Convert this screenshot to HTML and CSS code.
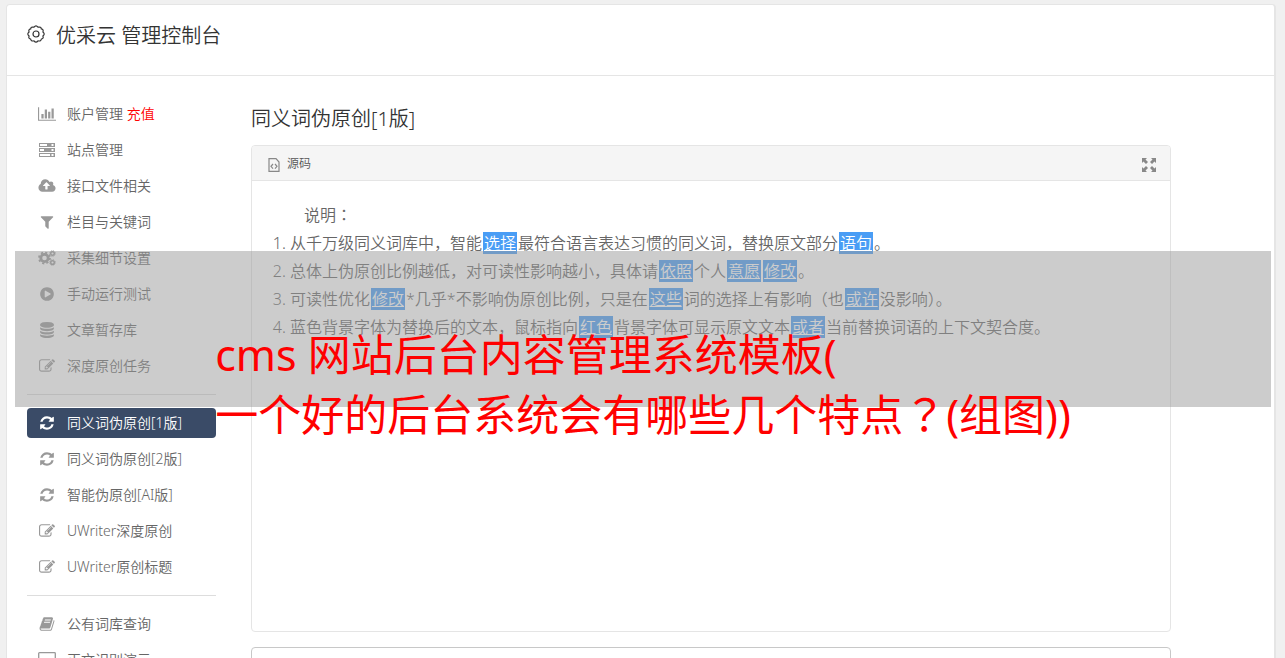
FILE: index.html
```
<!DOCTYPE html>
<html lang="zh-CN">
  <head>
    <title>优采云 管理控制台</title>
    <meta charset="utf-8" />
    <link rel="stylesheet" href="styles.css">
  </head>
  <body>
    <svg class="sprite" aria-hidden="true">
      <symbol id="i-chart" viewBox="0 0 2048 1792"><path d="M640 896v512h-256v-512h256zm384-512v1024h-256v-1024h256zm1024 1152v128h-2048v-1536h128v1408h1920zm-640-896v768h-256v-768h256zm384-384v1152h-256v-1152h256z"/></symbol>
      <symbol id="i-server" viewBox="0 0 18 16"><path fill-rule="evenodd" d="M1 1h16v4H1zM2 2v2h7V2zM13.500 2v2h2V2zM1 6h16v4H1zM2 7v2h4V7zM13.500 7v2h2V7zM1 11h16v4H1zM2 12v2h10v-2zM13.500 12v2h2v-2z"/></symbol>
      <symbol id="i-cloud" viewBox="0 0 1920 1792"><path d="M1280 864q0-14-9-23l-352-352q-9-9-23-9t-23 9l-351 351q-10 12-10 24 0 14 9 23t23 9h224v352q0 13 9.500 22.500t22.500 9.500h192q13 0 22.500-9.500t9.500-22.500v-352h224q13 0 22.500-9.500t9.500-22.500zm640 288q0 159-112.500 271.500t-271.500 112.500h-1088q-185 0-316.500-131.500t-131.500-316.500q0-130 70-240t188-165q-2-30-2-43 0-212 150-362t362-150q156 0 285.500 87t188.500 231q71-62 166-62 106 0 181 75t75 181q0 76-41 138 130 31 213.500 135.500t83.500 238.500z"/></symbol>
      <symbol id="i-filter" viewBox="0 0 1792 1792"><path d="M1595 295q17 41-14 70l-493 493v742q0 42-39 59-13 5-25 5-27 0-45-19l-256-256q-19-19-19-45v-486l-493-493q-31-29-14-70 17-39 59-39h1280q42 0 59 39z"/></symbol>
      <symbol id="i-cogs" viewBox="0 0 18 16"><g fill="none" stroke="currentColor"><circle cx="6.500" cy="8" r="3.700" stroke-width="2.800"/><circle cx="6.500" cy="8" r="5.500" stroke-width="1.800" stroke-dasharray="2.160 2.160"/><circle cx="14.500" cy="3.500" r="1.800" stroke-width="1.500"/><circle cx="14.500" cy="3.500" r="2.800" stroke-width="1" stroke-dasharray="1.100 1.100"/><circle cx="14.500" cy="12.500" r="1.800" stroke-width="1.500"/><circle cx="14.500" cy="12.500" r="2.800" stroke-width="1" stroke-dasharray="1.100 1.100"/></g></symbol>
      <symbol id="i-play" viewBox="0 0 1792 1792"><path d="M896 128q209 0 385.500 103t279.500 279.500 103 385.500-103 385.500-279.500 279.500-385.500 103-385.500-103-279.500-279.500-103-385.500 103-385.500 279.500-279.500 385.500-103zm384 823q32-18 32-55t-32-55l-544-320q-31-19-64-1-32 19-32 56v640q0 37 32 56 16 8 32 8 17 0 32-9z"/></symbol>
      <symbol id="i-database" viewBox="0 0 1792 1792"><path d="M896 768q237 0 443-43t325-127v170q0 69-103 128t-280 93.500-385 34.500-385-34.500-280-93.500-103-128v-170q119 84 325 127t443 43zm0 768q237 0 443-43t325-127v170q0 69-103 128t-280 93.500-385 34.500-385-34.500-280-93.500-103-128v-170q119 84 325 127t443 43zm0-384q237 0 443-43t325-127v170q0 69-103 128t-280 93.500-385 34.500-385-34.500-280-93.500-103-128v-170q119 84 325 127t443 43zm0-1152q208 0 385 34.500t280 93.500 103 128v128q0 69-103 128t-280 93.500-385 34.500-385-34.500-280-93.500-103-128v-128q0-69 103-128t280-93.500 385-34.500z"/></symbol>
      <symbol id="i-edit" viewBox="0 0 1792 1792"><path d="M888 1184l116-116-152-152-116 116v56h96v96h56zm440-720q-16-16-33 1l-350 350q-17 17-1 33t33-1l350-350q17-17 1-33zm80 594v190q0 119-84.500 203.500t-203.500 84.500h-832q-119 0-203.500-84.500t-84.500-203.500v-832q0-119 84.500-203.500t203.500-84.500h832q63 0 117 25 15 7 18 23 3 17-9 29l-49 49q-14 14-32 8-23-6-45-6h-832q-66 0-113 47t-47 113v832q0 66 47 113t113 47h832q66 0 113-47t47-113v-126q0-13 9-22l64-64q15-15 35-7t20 29zm-96-738l288 288-672 672h-288v-288zm444 132l-92 92-288-288 92-92q28-28 68-28t68 28l152 152q28 28 28 68t-28 68z"/></symbol>
      <symbol id="i-refresh" viewBox="0 0 1792 1792"><path d="M1639 1056q0 5-1 7-64 268-268 434.500t-478 166.500q-146 0-282.500-55t-243.500-157l-129 129q-19 19-45 19t-45-19-19-45v-448q0-26 19-45t45-19h448q26 0 45 19t19 45-19 45l-137 137q71 66 161 102t187 36q134 0 250-65t186-179q11-17 53-117 8-23 30-23h192q13 0 22.500 9.500t9.500 22.500zm25-800v448q0 26-19 45t-45 19h-448q-26 0-45-19t-19-45 19-45l138-138q-148-137-349-137-134 0-250 65t-186 179q-11 17-53 117-8 23-30 23h-199q-13 0-22.500-9.500t-9.500-22.500v-7q65-268 270-434.500t480-166.500q146 0 284 55.500t245 156.500l130-129q19-19 45-19t45 19 19 45z"/></symbol>
      <symbol id="i-book" viewBox="0 0 1792 1792"><path d="M1703 478q40 57 18 129l-275 906q-19 64-76.500 107.500t-122.500 43.500h-923q-77 0-148.500-53.500t-99.500-131.500q-24-67-2-127 0-4 3-27t4-37q1-8-3-21.500t-3-19.500q2-11 8-21t16.500-23.500 16.500-23.500q23-38 45-91.500t30-91.500q3-10 .5-30t-.5-28q3-11 17-28t17-23q21-36 42-92t25-90q1-9-2.500-32t.5-28q4-13 22-30.500t22-22.500q19-26 42.500-84.500t27.500-96.500q1-8-3-25.500t-2-26.500q2-8 9-18t18-23 17-21q8-12 16.500-30.500t15-35 16-36 19.500-32 26.500-23.500 36-11.500 47.500 5.500l-1 3q38-9 51-9h761q74 0 114 56t18 130l-274 906q-36 119-71.500 153.500t-128.500 34.500h-869q-27 0-38 15-11 16-1 43 24 70 144 70h923q29 0 56-15.500t35-41.500l300-987q7-22 5-57 38 15 59 43zm-1064 2q-4 13 2 22.500t20 9.500h608q13 0 25.500-9.500t16.500-22.500l21-64q4-13-2-22.500t-20-9.500h-608q-13 0-25.500 9.500t-16.500 22.500zm-83 256q-4 13 2 22.500t20 9.500h608q13 0 25.500-9.500t16.500-22.500l21-64q4-13-2-22.500t-20-9.500h-608q-13 0-25.500 9.500t-16.500 22.500z"/></symbol>
      <symbol id="i-desktop" viewBox="0 0 18 16"><path fill="none" stroke="currentColor" stroke-width="1.300" d="M1.500.7h15q.8 0 .8.800v9.500q0 .8-.8.800h-15q-.8 0-.8-.8v-9.500q0-.8.8-.8zM5 15h8M9 12v3"/></symbol>
      <symbol id="i-gear" viewBox="0 0 18 18"><path fill="none" stroke="currentColor" stroke-width="1.200" stroke-linejoin="round" d="M7 2.200Q9-.4 11 2.200Q14.200 1.500 14.300 3.900Q17 4.400 15.900 7Q18.500 9 15.900 11Q17 13.600 14.300 14.100Q14.200 16.600 11 15.800Q9 18.400 7 15.800Q3.800 16.600 3.700 14.100Q1 13.600 2.100 11Q-.5 9 2.100 7Q1 4.400 3.700 3.900Q3.800 1.500 7 2.200z"/><circle cx="9" cy="9" r="3" fill="none" stroke="currentColor" stroke-width="1.200"/></symbol>
      <symbol id="i-code" viewBox="0 0 12 14"><path fill="none" stroke="currentColor" stroke-width="1.200" d="M1 .6h7L11 4v9.400H1z"/><path fill="none" stroke="currentColor" stroke-width="1.200" d="M5 6L3 8.300l2 2.300M7 6l2 2.300-2 2.300"/></symbol>
      <symbol id="i-expand" viewBox="0 0 14 14"><path d="M0 0h5L3.500 1.500 6 4 4 6 1.500 3.500 0 5zM14 0v5l-1.500-1.500L10 6 8 4l2.500-2.500L9 0zM0 14V9l1.500 1.500L4 8l2 2-2.500 2.500L5 14zM14 14H9l1.500-1.500L8 10l2-2 2.500 2.500L14 9z"/></symbol>
    </svg>

    <div class="panel">
      <header class="panel-header">
        <svg class="gear"><use href="#i-gear"/></svg>
        <h1>优采云 管理控制台</h1>
      </header>
      <div class="panel-body">
        <nav class="sidebar">
          <ul>
            <li><a href="#"><svg class="icon"><use href="#i-chart"/></svg>账户管理 <span class="text-red">充值</span></a></li>
            <li><a href="#"><svg class="icon"><use href="#i-server"/></svg>站点管理</a></li>
            <li><a href="#"><svg class="icon"><use href="#i-cloud"/></svg>接口文件相关</a></li>
            <li><a href="#"><svg class="icon"><use href="#i-filter"/></svg>栏目与关键词</a></li>
            <li><a href="#"><svg class="icon"><use href="#i-cogs"/></svg>采集细节设置</a></li>
            <li><a href="#"><svg class="icon"><use href="#i-play"/></svg>手动运行测试</a></li>
            <li><a href="#"><svg class="icon"><use href="#i-database"/></svg>文章暂存库</a></li>
            <li><a href="#"><svg class="icon"><use href="#i-edit"/></svg>深度原创任务</a></li>
          </ul>
          <ul>
            <li class="active"><a href="#"><svg class="icon"><use href="#i-refresh"/></svg>同义词伪原创[1版]</a></li>
            <li><a href="#"><svg class="icon"><use href="#i-refresh"/></svg>同义词伪原创[2版]</a></li>
            <li><a href="#"><svg class="icon"><use href="#i-refresh"/></svg>智能伪原创[AI版]</a></li>
            <li><a href="#"><svg class="icon"><use href="#i-edit"/></svg>UWriter深度原创</a></li>
            <li><a href="#"><svg class="icon"><use href="#i-edit"/></svg>UWriter原创标题</a></li>
          </ul>
          <ul>
            <li><a href="#"><svg class="icon"><use href="#i-book"/></svg>公有词库查询</a></li>
            <li><a href="#"><svg class="icon"><use href="#i-desktop"/></svg>正文识别演示</a></li>
          </ul>
        </nav>

        <main class="content">
          <h2>同义词伪原创[1版]</h2>
          <div class="editor">
            <div class="toolbar">
              <button type="button" class="btn-tool"><svg class="icon-code"><use href="#i-code"/></svg>源码</button>
              <button type="button" class="btn-tool" aria-label="全屏"><svg class="icon-expand"><use href="#i-expand"/></svg></button>
            </div>
            <div class="editor-body">
              <p>说明<span class="punct" lang="ja">：</span></p>
              <ol>
                <li>从千万级同义词库中，智能<a href="#">选择</a>最符合语言表达习惯的同义词，替换原文部分<a href="#">语句</a>。</li>
                <li>总体上伪原创比例越低，对可读性影响越小，具体请<a href="#">依照</a>个人<a href="#">意愿</a><a href="#">修改</a>。</li>
                <li>可读性优化<a href="#">修改</a>*几乎*不影响伪原创比例，只是在<a href="#">这些</a>词的选择上有影响（也<a href="#">或许</a>没影响）。</li>
                <li>蓝色背景字体为替换后的文本，鼠标指向<a href="#">红色</a>背景字体可显示原文文本<a href="#">或者</a>当前替换词语的上下文契合度。</li>
              </ol>
            </div>
          </div>
          <textarea class="source-input" aria-label="原文"></textarea>
        </main>
      </div>
    </div>

    <div class="banner">
      <p>cms 网站后台内容管理系统模板(<br />一个好的后台系统会有哪些几个特点<span class="punct" lang="ja">？</span>(组图))</p>
    </div>
  </body>
</html>
```
FILE: styles.css
```
* {
	box-sizing: border-box;
}

body {
	display: flex;
	height: 100vh;
	margin: 0;
	padding: 4px 9px 0 6px;
	overflow: hidden;
	background: #f0f0f0;
	color: #666;
	font-family: "Noto Sans", "Noto Sans CJK SC", sans-serif;
	font-size: 14px;
	font-weight: 350;
}

h1,
h2,
p,
ol,
ul {
	margin: 0;
	padding: 0;
	font-weight: 350;
}

a {
	color: inherit;
	text-decoration: none;
}

svg {
	fill: currentColor;
	flex: none;
}

.sprite {
	position: absolute;
	width: 0;
	height: 0;
}

/* centred full-width marks */
.punct {
	font-family: "Noto Sans CJK JP", sans-serif;
	line-height: 1;
}

.panel {
	flex: 1;
	background: #fff;
	border: 1px solid #e5e5e5;
	border-width: 1px 2px 0 1px;
	border-radius: 4px 4px 0 0;
}

.panel-header {
	display: flex;
	align-items: center;
	gap: 11px;
	height: 71px;
	padding: 0 20px 9px;
	border-bottom: 1px solid #e5e5e5;
	color: #333;
}

h1,
h2 {
	color: #333;
	font-size: 20px;
	line-height: 30px;
}

.gear {
	width: 18px;
	height: 18px;
	margin-bottom: 3px;
}

.panel-body {
	display: flex;
	gap: 35px;
	padding: 23px 103px 0 20px;
}

/* Sidebar */

.sidebar {
	flex: none;
	width: 189px;
}

.sidebar ul {
	display: flex;
	flex-direction: column;
	gap: 6px;
	list-style: none;
}

.sidebar ul + ul {
	margin-top: 13px;
	padding-top: 13px;
	border-top: 1px solid #ddd;
}

.sidebar a {
	display: flex;
	align-items: center;
	height: 30px;
	padding: 0 11px 2px;
	border-radius: 4px;
	white-space: pre;
}

.icon {
	width: 18px;
	height: 16px;
	margin: 2px 11px 0 0;
	color: #999;
}

.text-red {
	color: #f00;
}

.sidebar .active a,
.active .icon {
	background: #3a4b67;
	color: #fff;
}

/* Editor */

.content {
	flex: 1;
	padding-top: 5px;
}

.editor {
	height: 487px;
	margin-top: 11px;
	border: 1px solid #e5e5e5;
	border-radius: 4px;
}

.toolbar {
	display: flex;
	align-items: center;
	justify-content: space-between;
	height: 35px;
	padding: 0 14px 0 16px;
	background: #f5f5f5;
	border-bottom: 1px solid #e5e5e5;
	border-radius: 3px 3px 0 0;
}

.btn-tool {
	display: flex;
	align-items: center;
	gap: 7px;
	padding: 0;
	border: none;
	background: none;
	color: #555;
	font: inherit;
	font-size: 12px;
	cursor: pointer;
}

.icon-code,
.icon-expand {
	width: 12px;
	height: 14px;
	margin-top: 3px;
	color: #888;
}

.icon-expand {
	width: 14px;
}

.editor-body {
	padding: 20px;
	font-size: 16px;
	line-height: 28px;
}

.editor-body p {
	text-indent: 2em;
}

.editor-body ol {
	padding-left: 18px;
}

.editor-body a {
	margin: 0 1px;
	padding: 0 1px;
	background: #499df5;
	color: #fff;
	text-decoration: underline;
}

.source-input {
	display: block;
	width: 100%;
	height: 120px;
	margin-top: 15px;
	border: 1px solid #c8c8c8;
	border-radius: 4px;
	resize: none;
}

/* Caption strip laid over the page */

.banner {
	position: absolute;
	top: 251px;
	left: 15px;
	right: 14px;
	display: flex;
	justify-content: center;
	height: 156px;
	padding-top: 74px;
	background: rgba(153, 153, 153, 0.5);
}

.banner p {
	color: #f00;
	font-size: 43px;
	font-weight: 400;
	line-height: 60px;
	white-space: nowrap;
}
```
